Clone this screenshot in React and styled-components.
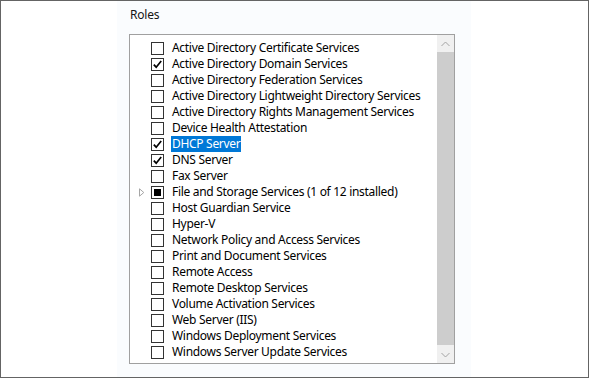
import React from "react";
import styled, { createGlobalStyle } from "styled-components";

const Global = createGlobalStyle`
  html, body { margin: 0; padding: 0; background: #ffffff; }
  body { font-family: "Noto Sans", "Open Sans", sans-serif; }
`;

const Window = styled.div`
  width: 589px;
  height: 378px;
  box-sizing: border-box;
  border: 1px solid #646464;
  display: flex;
  background: #ffffff;
  overflow: hidden;
`;

const Side = styled.div`
  width: ${(p) => p.$w}px;
  flex: none;
  background: #ffffff;
`;

const Panel = styled.div`
  width: 354px;
  flex: none;
  background: #fafcfe;
  padding: 6px 0 0 12px;
  box-sizing: border-box;
  display: flex;
  flex-direction: column;
`;

const Label = styled.div`
  font-size: 12px;
  line-height: 16px;
  color: #141414;
  letter-spacing: -0.2px;
  padding-left: 1px;
  height: 27px;
`;

const ListBox = styled.div`
  width: 326px;
  height: 330px;
  box-sizing: border-box;
  border: 1px solid #a0a0a0;
  background: #ffffff;
  display: flex;
`;

const Items = styled.div`
  flex: 1;
  padding-top: 5px;
  display: flex;
  flex-direction: column;
`;

const Row = styled.div`
  height: 16px;
  display: flex;
  align-items: center;
  padding-left: 9px;
  font-size: 12px;
  letter-spacing: -0.3px;
  color: #000;
  white-space: nowrap;
`;

const Expander = styled.div`
  width: 12px;
  flex: none;
  display: flex;
  align-items: center;
`;

const Box = styled.div`
  width: 13px;
  height: 13px;
  box-sizing: border-box;
  border: 1px solid #333333;
  background: #ffffff;
  flex: none;
  display: flex;
  align-items: center;
  justify-content: center;
  margin-right: 8px;
`;

const Partial = styled.div`
  width: 7px;
  height: 7px;
  background: #000;
`;

const Text = styled.span`
  line-height: 16px;
  margin-left: -1px;
  padding: 0 1px;
  background: ${(p) => (p.$sel ? "#0078d7" : "transparent")};
  color: ${(p) => (p.$sel ? "#ffffff" : "#000000")};
`;

const ScrollBar = styled.div`
  width: 17px;
  flex: none;
  background: #f0f0f0;
  display: flex;
  flex-direction: column;
`;

const ArrowBtn = styled.div`
  height: 17px;
  flex: none;
  display: flex;
  align-items: center;
  justify-content: center;
`;

const Thumb = styled.div`
  flex: 1;
  background: #cdcdcd;
  margin-bottom: 1px;
`;

const items = [
  { t: "Active Directory Certificate Services" },
  { t: "Active Directory Domain Services", c: true },
  { t: "Active Directory Federation Services" },
  { t: "Active Directory Lightweight Directory Services" },
  { t: "Active Directory Rights Management Services" },
  { t: "Device Health Attestation" },
  { t: "DHCP Server", c: true, sel: true },
  { t: "DNS Server", c: true },
  { t: "Fax Server" },
  { t: "File and Storage Services (1 of 12 installed)", p: true, exp: true },
  { t: "Host Guardian Service" },
  { t: "Hyper-V" },
  { t: "Network Policy and Access Services" },
  { t: "Print and Document Services" },
  { t: "Remote Access" },
  { t: "Remote Desktop Services" },
  { t: "Volume Activation Services" },
  { t: "Web Server (IIS)" },
  { t: "Windows Deployment Services" },
  { t: "Windows Server Update Services" },
];

const Check = () => (
  <svg width="11" height="11" viewBox="0 0 11 11">
    <path d="M1.8 5.6 L4.2 8.2 L9.2 2" fill="none" stroke="#000" strokeWidth="1.7" />
  </svg>
);

const Triangle = () => (
  <svg width="6" height="9" viewBox="0 0 6 9">
    <path d="M0.5 0.8 L4.8 4.5 L0.5 8.2 Z" fill="none" stroke="#a6a6a6" strokeWidth="1" />
  </svg>
);

const Chevron = ({ down }) => (
  <svg width="9" height="6" viewBox="0 0 9 6">
    <path
      d={down ? "M0.5 1 L4.5 5 L8.5 1" : "M0.5 5 L4.5 1 L8.5 5"}
      fill="none"
      stroke="#a3a3a3"
      strokeWidth="1"
    />
  </svg>
);

export default function App() {
  return (
    <>
      <Global />
      <Window>
        <Side $w={116} />
        <Panel>
          <Label>Roles</Label>
          <ListBox>
            <Items>
              {items.map((it) => (
                <Row key={it.t}>
                  <Expander>{it.exp && <Triangle />}</Expander>
                  <Box>
                    {it.c && <Check />}
                    {it.p && <Partial />}
                  </Box>
                  <Text $sel={it.sel}>{it.t}</Text>
                </Row>
              ))}
            </Items>
            <ScrollBar>
              <ArrowBtn>
                <Chevron />
              </ArrowBtn>
              <Thumb />
              <ArrowBtn>
                <Chevron down />
              </ArrowBtn>
            </ScrollBar>
          </ListBox>
        </Panel>
        <Side $w={117} />
      </Window>
    </>
  );
}
